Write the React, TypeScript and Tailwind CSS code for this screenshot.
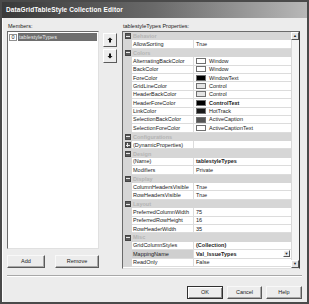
import { ReactNode } from 'react';

type Row = {
    cat?: string;
    name?: string;
    value?: string;
    swatch?: string;
    bold?: boolean;
    plus?: boolean;
    selected?: boolean;
    dropdown?: boolean;
};

const rows: Row[] = [
    { cat: 'Behavior' },
    { name: 'AllowSorting', value: 'True' },
    { cat: 'Colors' },
    { name: 'AlternatingBackColor', value: 'Window', swatch: '#ffffff' },
    { name: 'BackColor', value: 'Window', swatch: '#ffffff' },
    { name: 'ForeColor', value: 'WindowText', swatch: '#000000' },
    { name: 'GridLineColor', value: 'Control', swatch: '#e4e4e4' },
    { name: 'HeaderBackColor', value: 'Control', swatch: '#e4e4e4' },
    { name: 'HeaderForeColor', value: 'ControlText', swatch: '#000000', bold: true },
    { name: 'LinkColor', value: 'HotTrack', swatch: '#1a1a1a' },
    { name: 'SelectionBackColor', value: 'ActiveCaption', swatch: '#555555' },
    { name: 'SelectionForeColor', value: 'ActiveCaptionText', swatch: '#ffffff' },
    { cat: 'Configurations' },
    { name: '(DynamicProperties)', value: '', plus: true },
    { cat: 'Design' },
    { name: '(Name)', value: 'tablestyleTypes', bold: true },
    { name: 'Modifiers', value: 'Private' },
    { cat: 'Display' },
    { name: 'ColumnHeadersVisible', value: 'True' },
    { name: 'RowHeadersVisible', value: 'True' },
    { cat: 'Layout' },
    { name: 'PreferredColumnWidth', value: '75' },
    { name: 'PreferredRowHeight', value: '16' },
    { name: 'RowHeaderWidth', value: '35' },
    { cat: 'Misc' },
    { name: 'GridColumnStyles', value: '(Collection)', bold: true },
    { name: 'MappingName', value: 'Val_IssueTypes', bold: true, selected: true, dropdown: true },
    { name: 'ReadOnly', value: 'False' },
];

function Btn({ children, w, def }: { children: ReactNode; w: string; def?: boolean }) {
    return (
        <div
            className={`${w} h-[13px] flex items-center justify-center bg-[#ececec] text-[5.5px] text-[#222] ${
                def
                    ? 'border border-[#303030] shadow-[inset_1px_1px_#fff,inset_-1px_-1px_#8a8a8a]'
                    : 'border border-t-[#f8f8f8] border-l-[#f8f8f8] border-r-[#5a5a5a] border-b-[#5a5a5a] shadow-[inset_-1px_-1px_#a8a8a8]'
            }`}
        >
            {children}
        </div>
    );
}

function ExpandBox({ plus }: { plus?: boolean }) {
    return (
        <div className="w-[6px] h-[6px] bg-[#5a5a5a] border border-[#444] flex items-center justify-center relative">
            <div className="w-[4px] h-px bg-[#e8e8e8]" />
            {plus && <div className="absolute w-px h-[4px] bg-[#e8e8e8]" />}
        </div>
    );
}

function PropRow({ r }: { r: Row }) {
    if (r.cat) {
        return (
            <div className="h-[8.4px] flex items-center bg-[#d6d6d6]">
                <div className="w-[9px] flex justify-center">
                    <ExpandBox />
                </div>
                <span className="pl-[1px] text-[#b4b4b4] font-bold">{r.cat}</span>
            </div>
        );
    }
    return (
        <div className="h-[8.4px] flex">
            <div className="w-[9px] bg-[#d6d6d6] flex items-center justify-center">
                {r.plus && <ExpandBox plus />}
            </div>
            <div
                className={`w-[62px] flex items-center pl-[1px] border-b border-r border-[#dcdcdc] overflow-hidden whitespace-nowrap ${
                    r.selected ? 'bg-[#cfcfcf]' : 'bg-white'
                }`}
            >
                {r.name}
            </div>
            <div className="flex-1 flex items-center pl-[2px] bg-white border-b border-[#dcdcdc] whitespace-nowrap overflow-hidden">
                {r.swatch && (
                    <div className="w-[10px] h-[6px] mr-[3px] border border-[#707070]" style={{ background: r.swatch }} />
                )}
                <span className={r.bold ? 'font-bold' : ''}>{r.value}</span>
                {r.dropdown && (
                    <div className="ml-auto mr-[1px] w-[7px] h-[7px] bg-[#ececec] border border-t-white border-l-white border-r-[#555] border-b-[#555] flex items-center justify-center text-[4px] leading-none">
                        ▼
                    </div>
                )}
            </div>
        </div>
    );
}

export default function App() {
    return (
        <div
            className="w-[309px] h-[304px] bg-[#ececec] border-2 border-[#4a4a4a] shadow-[inset_1px_1px_#fff] flex flex-col text-[#1a1a1a] overflow-hidden"
            style={{ fontFamily: '"Liberation Sans", Arial, sans-serif' }}
        >
            {/* title bar */}
            <div className="h-[16px] shrink-0 flex items-center pl-[4px] bg-gradient-to-r from-[#3a3a3a] via-[#6a6a6a] to-[#b8b8b8]">
                <span className="text-white font-bold text-[6.5px] tracking-[0.1px]">DataGridTableStyle Collection Editor</span>
            </div>

            <div className="flex px-[5px] pt-[3px]">
                {/* members */}
                <div className="w-[92px] flex flex-col">
                    <div className="h-[10px] text-[5.5px] flex items-center pl-[1px]">Members:</div>
                    <div className="h-[218px] bg-white border border-t-[#6a6a6a] border-l-[#6a6a6a] border-r-[#e0e0e0] border-b-[#e0e0e0] pt-[1px] pl-[1px]">
                        <div className="h-[8px] flex items-center text-[5.5px]">
                            <div className="w-[8px] h-[7px] border border-[#909090] bg-white flex items-center justify-center">0</div>
                            <div className="flex-1 h-[8px] ml-[1px] mr-[1px] bg-[#6e6e6e] text-[#e8e8e8] flex items-center pl-[1px]">
                                tablestyleTypes
                            </div>
                        </div>
                    </div>
                    <div className="flex justify-between mt-[6px]">
                        <Btn w="w-[38px]">Add</Btn>
                        <Btn w="w-[44px]">Remove</Btn>
                    </div>
                </div>

                {/* move buttons */}
                <div className="w-[14px] ml-[4px] mt-[12px] flex flex-col gap-[2px]">
                    <div className="h-[14px] bg-[#ececec] border border-t-white border-l-white border-r-[#5a5a5a] border-b-[#5a5a5a] flex items-center justify-center">
                        <svg width="6" height="6" viewBox="0 0 6 6">
                            <path d="M3 0.5 L5.5 3 H4 V5.5 H2 V3 H0.5 Z" fill="#111" />
                        </svg>
                    </div>
                    <div className="h-[14px] bg-[#ececec] border border-t-white border-l-white border-r-[#5a5a5a] border-b-[#5a5a5a] flex items-center justify-center">
                        <svg width="6" height="6" viewBox="0 0 6 6">
                            <path d="M3 5.5 L5.5 3 H4 V0.5 H2 V3 H0.5 Z" fill="#111" />
                        </svg>
                    </div>
                </div>

                {/* properties */}
                <div className="w-[178px] ml-[5px] flex flex-col">
                    <div className="h-[10px] text-[5.5px] flex items-center pl-[1px]">tablestyleTypes Properties:</div>
                    <div className="h-[238px] flex border border-t-[#6a6a6a] border-l-[#6a6a6a] border-r-[#3a3a3a] border-b-[#e0e0e0] bg-white">
                        <div className="flex-1 flex flex-col text-[5.5px] text-[#222]">
                            {rows.map((r, i) => (
                                <PropRow key={i} r={r} />
                            ))}
                        </div>
                        {/* scrollbar */}
                        <div className="w-[8px] bg-[#f0f0f0] flex flex-col">
                            <div className="h-[8px] bg-[#e4e4e4] border border-t-white border-l-white border-r-[#555] border-b-[#555] flex items-center justify-center text-[4px] leading-none">
                                ▲
                            </div>
                            <div className="flex-1 bg-[#f4f4f4] border-l border-[#d8d8d8]" />
                            <div className="h-[8px] bg-[#e4e4e4] border border-t-white border-l-white border-r-[#555] border-b-[#555] flex items-center justify-center text-[4px] leading-none">
                                ▼
                            </div>
                        </div>
                    </div>
                </div>
            </div>

            {/* separator */}
            <div className="mx-[5px] mt-[6px] h-[2px] border-t border-[#a8a8a8] border-b border-b-white" />

            <div className="flex justify-end gap-[4px] pr-[5px] mt-[9px]">
                <Btn w="w-[36px]" def>
                    OK
                </Btn>
                <Btn w="w-[35px]">Cancel</Btn>
                <Btn w="w-[36px]">Help</Btn>
            </div>
        </div>
    );
}
